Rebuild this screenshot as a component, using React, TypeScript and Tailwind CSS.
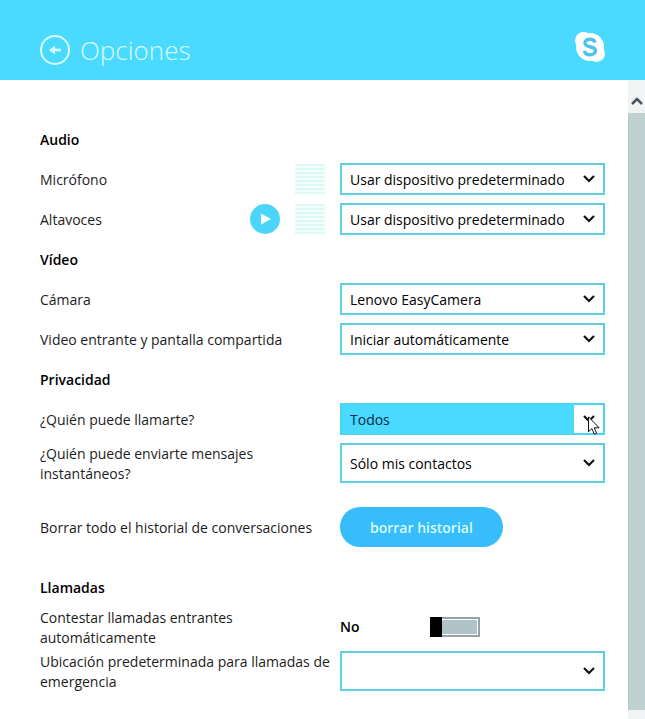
import { useState } from "react";
import type { ReactNode } from "react";

type SelectProps = {
  id: string;
  options: string[];
  tall?: boolean;
  active?: boolean;
};

function Chevron() {
  return (
    <svg viewBox="0 0 12 8" className="h-2 w-3" fill="none" stroke="#111" strokeWidth="2.200">
      <path d="M1 1l5 5 5-5" />
    </svg>
  );
}

function Pointer() {
  return (
    <svg viewBox="0 0 12 19" className="absolute top-[11px] left-3.5 h-[19px] w-3">
      <path d="M.5.8v15l3.4-3.2 2.4 5.6 2.3-1-2.4-5.4h4.9z" fill="#fff" stroke="#111" />
    </svg>
  );
}

function Select({ id, options, tall, active }: SelectProps) {
  return (
    <div className={`relative w-full ${tall ? "h-10" : "h-8"}`}>
      <select
        id={id}
        className={`block h-full w-full appearance-none border-2 pt-0.5 pr-8 pl-2 text-sm outline-none ${
          active ? "border-[#4bd5f5] bg-[#4bdaff] text-[#002b45]" : "border-[#5ccfe0] bg-white text-black"
        }`}
      >
        {options.map((option) => (
          <option key={option}>{option}</option>
        ))}
      </select>
      {/* Arrow sits over the native control */}
      <span className="pointer-events-none absolute inset-y-0.5 right-0.5 flex w-[29px] items-center justify-center bg-white">
        <Chevron />
        {active && <Pointer />}
      </span>
    </div>
  );
}

function LevelMeter() {
  return (
    <span className="flex size-[30px] flex-col gap-0.5 bg-[#f3fdfc]">
      {[0, 1, 2, 3, 4, 5, 6, 7].map((bar) => (
        <span key={bar} className="h-0.5 bg-[#e0f8f5]" />
      ))}
    </span>
  );
}

function Row({ id, label, extra, children }: { id: string; label: string; extra?: ReactNode; children: ReactNode }) {
  return (
    <div className="grid grid-cols-[300px_1fr] items-center">
      <div className="flex items-center justify-between pr-[15px]">
        <label htmlFor={id} className={extra ? "pt-0.5" : "-mr-3 -mb-px pt-px"}>
          {label}
        </label>
        {extra}
      </div>
      {children}
    </div>
  );
}

function Heading({ children }: { children: ReactNode }) {
  return <h2 className="flex h-8 items-center pt-0.5 font-semibold text-black">{children}</h2>;
}

export default function App() {
  const [autoAnswer, setAutoAnswer] = useState(false);

  return (
    <div className="flex min-h-screen flex-col bg-white font-['Open_Sans','Noto_Sans',sans-serif] text-sm leading-5 text-[#1c1c1c]">
      <header className="flex h-20 items-center justify-between bg-[#4bdaff] px-10 pt-4">
        <div className="flex items-center gap-2.5 text-[#d5fbff]">
          <button aria-label="Atrás" className="mt-1">
            <svg viewBox="0 0 30 30" className="size-[30px]" fill="none" stroke="currentColor" strokeWidth="2">
              <circle cx="15" cy="15" r="14" />
              <path d="M21 15H11" strokeWidth="2.600" />
              <path d="M9 15l6-4.600v3l-1.500 1.600 1.500 1.600v3z" fill="currentColor" stroke="none" />
            </svg>
          </button>
          <h1 className="pt-1 text-[26px] leading-8 font-light">Opciones</h1>
        </div>
        <svg viewBox="0 0 30 30" className="mb-0.5 size-[30px]" role="img" aria-label="Skype">
          <g fill="#fff">
            <circle cx="15" cy="15" r="14" />
            <circle cx="8.500" cy="8.500" r="8.500" />
            <circle cx="21.500" cy="21.500" r="8.500" />
          </g>
          <path
            d="M20 10.600C19.400 8.200 17.500 7.300 15 7.300c-2.900 0-5 1.300-5 3.600 0 5 10.400 2.700 10.400 7.800 0 2.600-2.400 4-5.300 4-3 0-5.100-1.200-5.700-3.900"
            fill="none"
            stroke="#4bc4e8"
            strokeWidth="3.400"
          />
        </svg>
      </header>

      <div className="flex flex-1">
        <main className="min-w-0 flex-1 pt-[43px] pr-[23px] pb-7 pl-10">
          <section className="flex flex-col gap-2">
            <Heading>Audio</Heading>
            <Row id="mic" label="Micrófono" extra={<LevelMeter />}>
              <Select id="mic" options={["Usar dispositivo predeterminado"]} />
            </Row>
            <Row
              id="speakers"
              label="Altavoces"
              extra={
                <div className="flex gap-[15px]">
                  <button
                    aria-label="Probar altavoces"
                    className="flex size-[30px] items-center justify-center rounded-full bg-[#4bd5fa]"
                  >
                    <svg viewBox="0 0 10 12" className="ml-0.5 h-3 w-2.5" fill="#fff">
                      <path d="M0 .5l10 5.500-10 5.500z" />
                    </svg>
                  </button>
                  <LevelMeter />
                </div>
              }
            >
              <Select id="speakers" options={["Usar dispositivo predeterminado"]} />
            </Row>
          </section>

          <section className="mt-2 flex flex-col gap-2">
            <Heading>Vídeo</Heading>
            <Row id="camera" label="Cámara">
              <Select id="camera" options={["Lenovo EasyCamera"]} />
            </Row>
            <Row id="incoming" label="Video entrante y pantalla compartida">
              <Select id="incoming" options={["Iniciar automáticamente"]} />
            </Row>
          </section>

          <section className="mt-2 flex flex-col gap-2">
            <Heading>Privacidad</Heading>
            <Row id="callers" label="¿Quién puede llamarte?">
              <Select id="callers" options={["Todos", "Sólo mis contactos"]} active />
            </Row>
            <Row id="messages" label="¿Quién puede enviarte mensajes instantáneos?">
              <Select id="messages" options={["Sólo mis contactos", "Todos"]} tall />
            </Row>
            <div className="mt-4">
              <Row id="clear" label="Borrar todo el historial de conversaciones">
                <button
                  id="clear"
                  className="h-10 justify-self-start rounded-full bg-[#38bdfc] px-[30px] pt-0.5 font-semibold text-[#d5fbff]"
                >
                  borrar historial
                </button>
              </Row>
            </div>
          </section>

          <section className="mt-6 flex flex-col gap-1">
            <Heading>Llamadas</Heading>
            <Row id="answer" label="Contestar llamadas entrantes automáticamente">
              <div className="flex items-center">
                <span className="w-[90px] font-semibold text-black">{autoAnswer ? "Sí" : "No"}</span>
                <input
                  id="answer"
                  type="checkbox"
                  role="switch"
                  checked={autoAnswer}
                  onChange={(e) => setAutoAnswer(e.target.checked)}
                  className="flex h-5 w-[50px] appearance-none border-2 border-[#93a3a8] bg-[#b0c3c8] inset-ring inset-ring-white before:-my-0.5 before:-ml-0.5 before:w-3 before:bg-black checked:justify-end"
                />
              </div>
            </Row>
            <Row id="location" label="Ubicación predeterminada para llamadas de emergencia">
              <Select id="location" options={[""]} tall />
            </Row>
          </section>
        </main>

        {/* Scrollbar */}
        <div className="flex w-[17px] flex-col bg-[#f0f4f4]">
          <div className="flex h-[33px] items-end justify-center pb-2">
            <svg viewBox="0 0 12 8" className="h-2 w-3" fill="none" stroke="#48555a" strokeWidth="2.500">
              <path d="M1 7l5-5 5 5" />
            </svg>
          </div>
          <div className="mb-[9px] flex-1 border-l border-[#b5c5c5] bg-[#bfd0d0]" />
        </div>
      </div>
    </div>
  );
}
